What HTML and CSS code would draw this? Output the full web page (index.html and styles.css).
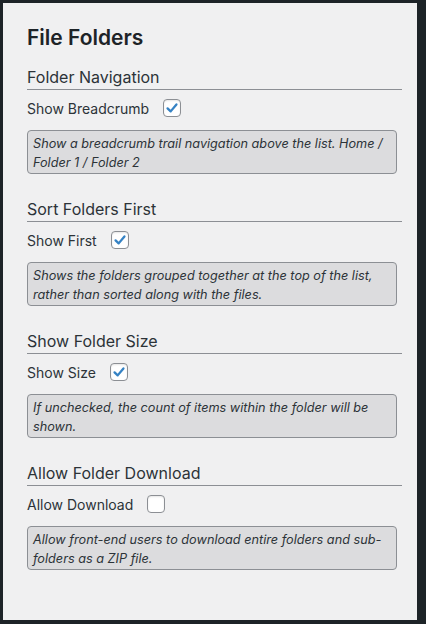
FILE: index.html
```html
<!DOCTYPE html>
<html lang="en">
<head>
    <meta charset="UTF-8">
    <meta name="viewport" content="width=device-width, initial-scale=1.0">
    <title>File Folders</title>
    <link rel="stylesheet" href="styles.css">
</head>
<body>

    <div class="panel">
        <h2 class="panel-title">File Folders</h2>

        <div class="section">
            <h3 class="section-title">Folder Navigation</h3>
            <label class="option">
                <span>Show Breadcrumb</span>
                <span class="check is-checked">
                    <svg viewBox="0 0 18 18"><path d="M4 9.4 L7.5 12.8 L14 5"/></svg>
                </span>
            </label>
            <p class="hint">Show a breadcrumb trail navigation above the list. Home / Folder 1 / Folder 2</p>
        </div>

        <div class="section">
            <h3 class="section-title">Sort Folders First</h3>
            <label class="option">
                <span>Show First</span>
                <span class="check is-checked">
                    <svg viewBox="0 0 18 18"><path d="M4 9.4 L7.5 12.8 L14 5"/></svg>
                </span>
            </label>
            <p class="hint">Shows the folders grouped together at the top of the list, rather than sorted along with the files.</p>
        </div>

        <div class="section">
            <h3 class="section-title">Show Folder Size</h3>
            <label class="option">
                <span>Show Size</span>
                <span class="check is-checked">
                    <svg viewBox="0 0 18 18"><path d="M4 9.4 L7.5 12.8 L14 5"/></svg>
                </span>
            </label>
            <p class="hint">If unchecked, the count of items within the folder will be shown.</p>
        </div>

        <div class="section">
            <h3 class="section-title">Allow Folder Download</h3>
            <label class="option">
                <span>Allow Download</span>
                <span class="check"></span>
            </label>
            <p class="hint">Allow front-end users to download entire folders and sub-folders as a ZIP file.</p>
        </div>
    </div>

</body>
</html>
```

FILE: styles.css
```css
body {
    margin: 0;
    padding: 3px 9px 4px 3px;
    background-color: #1d2327;
    font-family: Inter, "Noto Sans", sans-serif;
    color: #1d2327;
}
.panel {
    background-color: #f0f0f1;
    height: 617px;
    box-sizing: border-box;
    padding: 21px 15px 0 24px;
}
.panel-title {
    margin: 0;
    font-size: 21px;
    line-height: 28px;
    font-weight: 600;
}
.section {
    margin-top: 13px;
}
.section + .section {
    margin-top: 23px;
}
.section-title {
    margin: 0;
    font-size: 16px;
    line-height: 24px;
    font-weight: 400;
    color: #2c3338;
    border-bottom: 1px solid #8c8f94;
}
.option {
    display: flex;
    align-items: center;
    gap: 14px;
    height: 20px;
    margin-top: 8px;
    font-size: 14px;
    color: #2c3338;
}
.check {
    width: 18px;
    height: 18px;
    box-sizing: border-box;
    border: 1px solid #8c8f94;
    border-radius: 4px;
    background-color: #fff;
    box-shadow: inset 0 1px 2px rgba(0, 0, 0, 0.1);
    display: flex;
}
.check svg {
    width: 16px;
    height: 16px;
    fill: none;
    stroke: #3582c4;
    stroke-width: 2.6;
    stroke-linecap: round;
    stroke-linejoin: round;
}
.hint {
    margin: 12px 5px 0 0;
    padding: 3px 5px 1px;
    background-color: #dcdcde;
    border: 1px solid #8c8f94;
    border-radius: 4px;
    font-size: 12.7px;
    line-height: 19px;
    font-style: italic;
    color: #2c3338;
}
```
